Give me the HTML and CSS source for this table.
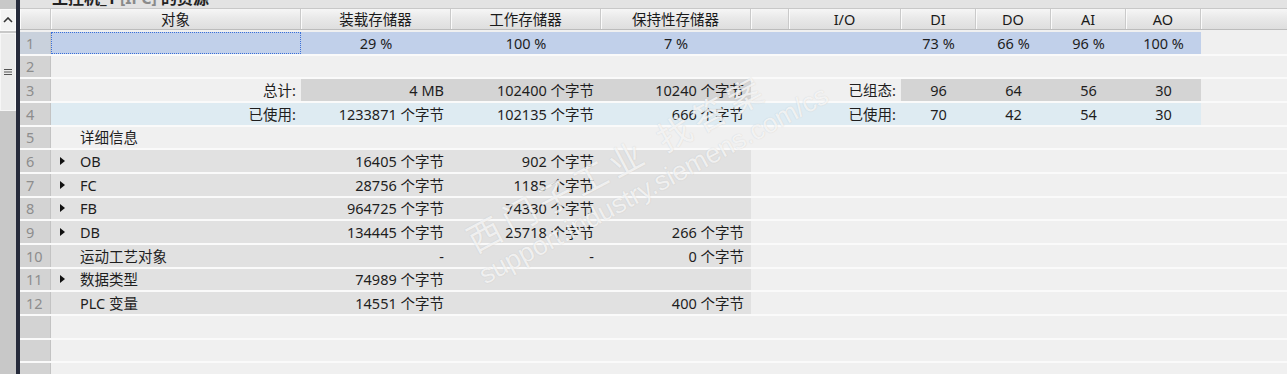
FILE: index.html
```html
<!DOCTYPE html>
<html lang="zh-CN">
<head>
<meta charset="utf-8">
<title>资源</title>
<link rel="stylesheet" href="styles.css">
</head>
<body>
<div class="app">
  <aside class="side">
    <div class="side-btn">
      <svg width="10" height="6" viewBox="0 0 10 6"><polyline points="1,5 5,1 9,5" fill="none" stroke="#333" stroke-width="1.6"/></svg>
    </div>
    <div class="side-panel">
      <svg width="8" height="8" viewBox="0 0 8 8"><path d="M0 1.5H8M0 4H8M0 6.5H8" stroke="#555" stroke-width="1"/></svg>
    </div>
  </aside>
  <div class="splitter"></div>
  <main class="main">
    <div class="title"><span class="title-text">工控机_1 <span class="dim">[IPC]</span> 的资源</span></div>

    <div class="row head">
      <div class="c num"></div>
      <div class="c ctr">对象</div>
      <div class="c ctr">装载存储器</div>
      <div class="c ctr">工作存储器</div>
      <div class="c ctr">保持性存储器</div>
      <div class="c"></div>
      <div class="c ctr">I/O</div>
      <div class="c ctr">DI</div>
      <div class="c ctr">DO</div>
      <div class="c ctr">AI</div>
      <div class="c ctr">AO</div>
      <div class="c last"></div>
    </div>

    <div class="row sel">
      <div class="c num">1</div>
      <div class="c focus"></div>
      <div class="c ctr">29 %</div>
      <div class="c ctr">100 %</div>
      <div class="c ctr">7 %</div>
      <div class="c"></div>
      <div class="c"></div>
      <div class="c ctr">73 %</div>
      <div class="c ctr">66 %</div>
      <div class="c ctr">96 %</div>
      <div class="c ctr">100 %</div>
      <div class="c plain"></div>
    </div>

    <div class="row">
      <div class="c num">2</div>
    </div>

    <div class="row">
      <div class="c num">3</div>
      <div class="c r lab">总计:</div>
      <div class="c r g">4 MB</div>
      <div class="c r g">102400 个字节</div>
      <div class="c r g">10240 个字节</div>
      <div class="c"></div>
      <div class="c r lab">已组态:</div>
      <div class="c ctr g">96</div>
      <div class="c ctr g">64</div>
      <div class="c ctr g">56</div>
      <div class="c ctr g">30</div>
    </div>

    <div class="row used">
      <div class="c num">4</div>
      <div class="c r lab">已使用:</div>
      <div class="c r">1233871 个字节</div>
      <div class="c r">102135 个字节</div>
      <div class="c r">666 个字节</div>
      <div class="c"></div>
      <div class="c r lab">已使用:</div>
      <div class="c ctr">70</div>
      <div class="c ctr">42</div>
      <div class="c ctr">54</div>
      <div class="c ctr">30</div>
      <div class="c plain"></div>
    </div>

    <div class="row">
      <div class="c num">5</div>
      <div class="c name">详细信息</div>
    </div>

    <div class="row det">
      <div class="c num">6</div>
      <div class="c name"><span class="tri"></span>OB</div>
      <div class="c r">16405 个字节</div>
      <div class="c r">902 个字节</div>
      <div class="c r"></div>
    </div>

    <div class="row det">
      <div class="c num">7</div>
      <div class="c name"><span class="tri"></span>FC</div>
      <div class="c r">28756 个字节</div>
      <div class="c r">1185 个字节</div>
      <div class="c r"></div>
    </div>

    <div class="row det">
      <div class="c num">8</div>
      <div class="c name"><span class="tri"></span>FB</div>
      <div class="c r">964725 个字节</div>
      <div class="c r">74330 个字节</div>
      <div class="c r"></div>
    </div>

    <div class="row det">
      <div class="c num">9</div>
      <div class="c name"><span class="tri"></span>DB</div>
      <div class="c r">134445 个字节</div>
      <div class="c r">25718 个字节</div>
      <div class="c r">266 个字节</div>
    </div>

    <div class="row det">
      <div class="c num">10</div>
      <div class="c name">运动工艺对象</div>
      <div class="c r">-</div>
      <div class="c r">-</div>
      <div class="c r">0 个字节</div>
    </div>

    <div class="row det">
      <div class="c num">11</div>
      <div class="c name"><span class="tri"></span>数据类型</div>
      <div class="c r">74989 个字节</div>
      <div class="c r"></div>
      <div class="c r"></div>
    </div>

    <div class="row det">
      <div class="c num">12</div>
      <div class="c name">PLC 变量</div>
      <div class="c r">14551 个字节</div>
      <div class="c r"></div>
      <div class="c r">400 个字节</div>
    </div>

    <div class="row"><div class="c num"></div></div>
    <div class="row"><div class="c num"></div></div>
    <div class="row"><div class="c num"></div></div>
  </main>

  <div class="watermark">
    <div class="wm-cn">西门子工业 找答案</div>
    <div class="wm-url">support.industry.siemens.com/cs</div>
  </div>
</div>
</body>
</html>
```

FILE: styles.css
```css
html, body {
  margin: 0;
  padding: 0;
}

body {
  background: #f0f0f0;
  font-family: "Noto Sans", "Noto Sans CJK SC", sans-serif;
  font-size: 14.5px;
  color: #1e1e1e;
}

.app {
  position: relative;
  display: flex;
  width: 1287px;
  height: 374px;
  overflow: hidden;
}

/* left strip */
.side {
  width: 16px;
  flex: none;
  background: #c8c8c8;
  display: flex;
  flex-direction: column;
  gap: 2px;
  padding-top: 9px;
  box-sizing: border-box;
}

.side-btn {
  height: 22px;
  background: #f3f3f3;
  border: 1px solid #fbfbfb;
  box-sizing: border-box;
  display: flex;
  align-items: center;
  justify-content: center;
}

.side-panel {
  height: 78px;
  background: #ebebeb;
  border: 1px solid #f6f6f6;
  box-sizing: border-box;
  display: flex;
  align-items: center;
  justify-content: flex-start;
  padding-left: 3px;
}

.splitter {
  width: 4px;
  flex: none;
  background: #262b3b;
}

/* main table */
.main {
  flex: 1;
  display: flex;
  flex-direction: column;
  min-width: 0;
}

.title {
  height: 8px;
  overflow: hidden;
  background: #e3e3e3;
  flex: none;
}

.title-text {
  display: block;
  margin-top: -11px;
  padding-left: 32px;
  font-size: 16px;
  font-weight: 700;
  line-height: 18px;
  color: #222;
  white-space: nowrap;
}

.title-text .dim {
  color: #8a8a8a;
}

.row {
  display: grid;
  grid-template-columns: 31px 250px 150px 150px 150px 38px 112px 75px 75px 75px 75px 1fr;
  height: 21.67px;
  border-bottom: 2px solid #fafafa;
  flex: none;
}

.c {
  display: flex;
  align-items: center;
  padding: 0 7px;
  white-space: nowrap;
  min-width: 0;
  line-height: 18px;
}

.c.r {
  justify-content: flex-end;
}

.c.ctr {
  justify-content: center;
}

.c.lab {
  padding-right: 5px;
}

.c.num {
  background: #d3d3d3;
  border-right: 1px solid #c3c3c3;
  padding: 0 0 0 6px;
  color: #8d8d8d;
}

/* header */
.row.head {
  height: 20px;
  border-top: 1px solid #c8c8c8;
  border-bottom: 1px solid #bcbcbc;
  margin-bottom: 2px;
  background: linear-gradient(#f6f6f6, #e9e9e9 45%, #dedede);
}

.row.head .c {
  border-right: 1px solid #cacaca;
  box-shadow: inset 1px 0 0 #fbfbfb;
  color: #1a1a1a;
}

.row.head .c.num {
  background: transparent;
}

.row.head .c.last {
  border-right: none;
}

/* selected row 1 */
.row.sel .c {
  background: #c1d0ea;
}

.row.sel .c.num {
  background: #c9d1dc;
}

.row.sel .c.plain {
  background: transparent;
}

.c.focus {
  outline: 1px dotted #3a6fd8;
  outline-offset: -1px;
}

/* totals */
.c.g {
  background: #d4d4d4;
}

.row.used .c {
  background: #deebf2;
}

.row.used .c.num {
  background: #d3d3d3;
}

.row.used .c.plain {
  background: transparent;
}

/* detail rows */
.row.det .c {
  background: #e1e1e1;
}

.row.det .c.num {
  background: #d3d3d3;
}

.c.name {
  padding-left: 29px;
}

.row.det .c.name:has(.tri) {
  padding-left: 9px;
}

.tri {
  width: 0;
  height: 0;
  border-left: 5px solid #111;
  border-top: 4px solid transparent;
  border-bottom: 4px solid transparent;
  margin-right: 15px;
  flex: none;
}

/* watermark overlay */
.watermark {
  position: absolute;
  left: 488px;
  top: 218px;
  transform: rotate(-28deg);
  transform-origin: 0 100%;
  pointer-events: none;
  color: rgba(255, 255, 255, 0.75);
  text-shadow: 0 0 1px rgba(120, 120, 120, 0.3);
  white-space: nowrap;
}

.wm-cn {
  font-size: 34px;
  letter-spacing: 6px;
  line-height: 42px;
  padding-left: 6px;
}

.wm-url {
  font-family: "Liberation Sans", sans-serif;
  font-size: 27px;
  line-height: 30px;
}
```
